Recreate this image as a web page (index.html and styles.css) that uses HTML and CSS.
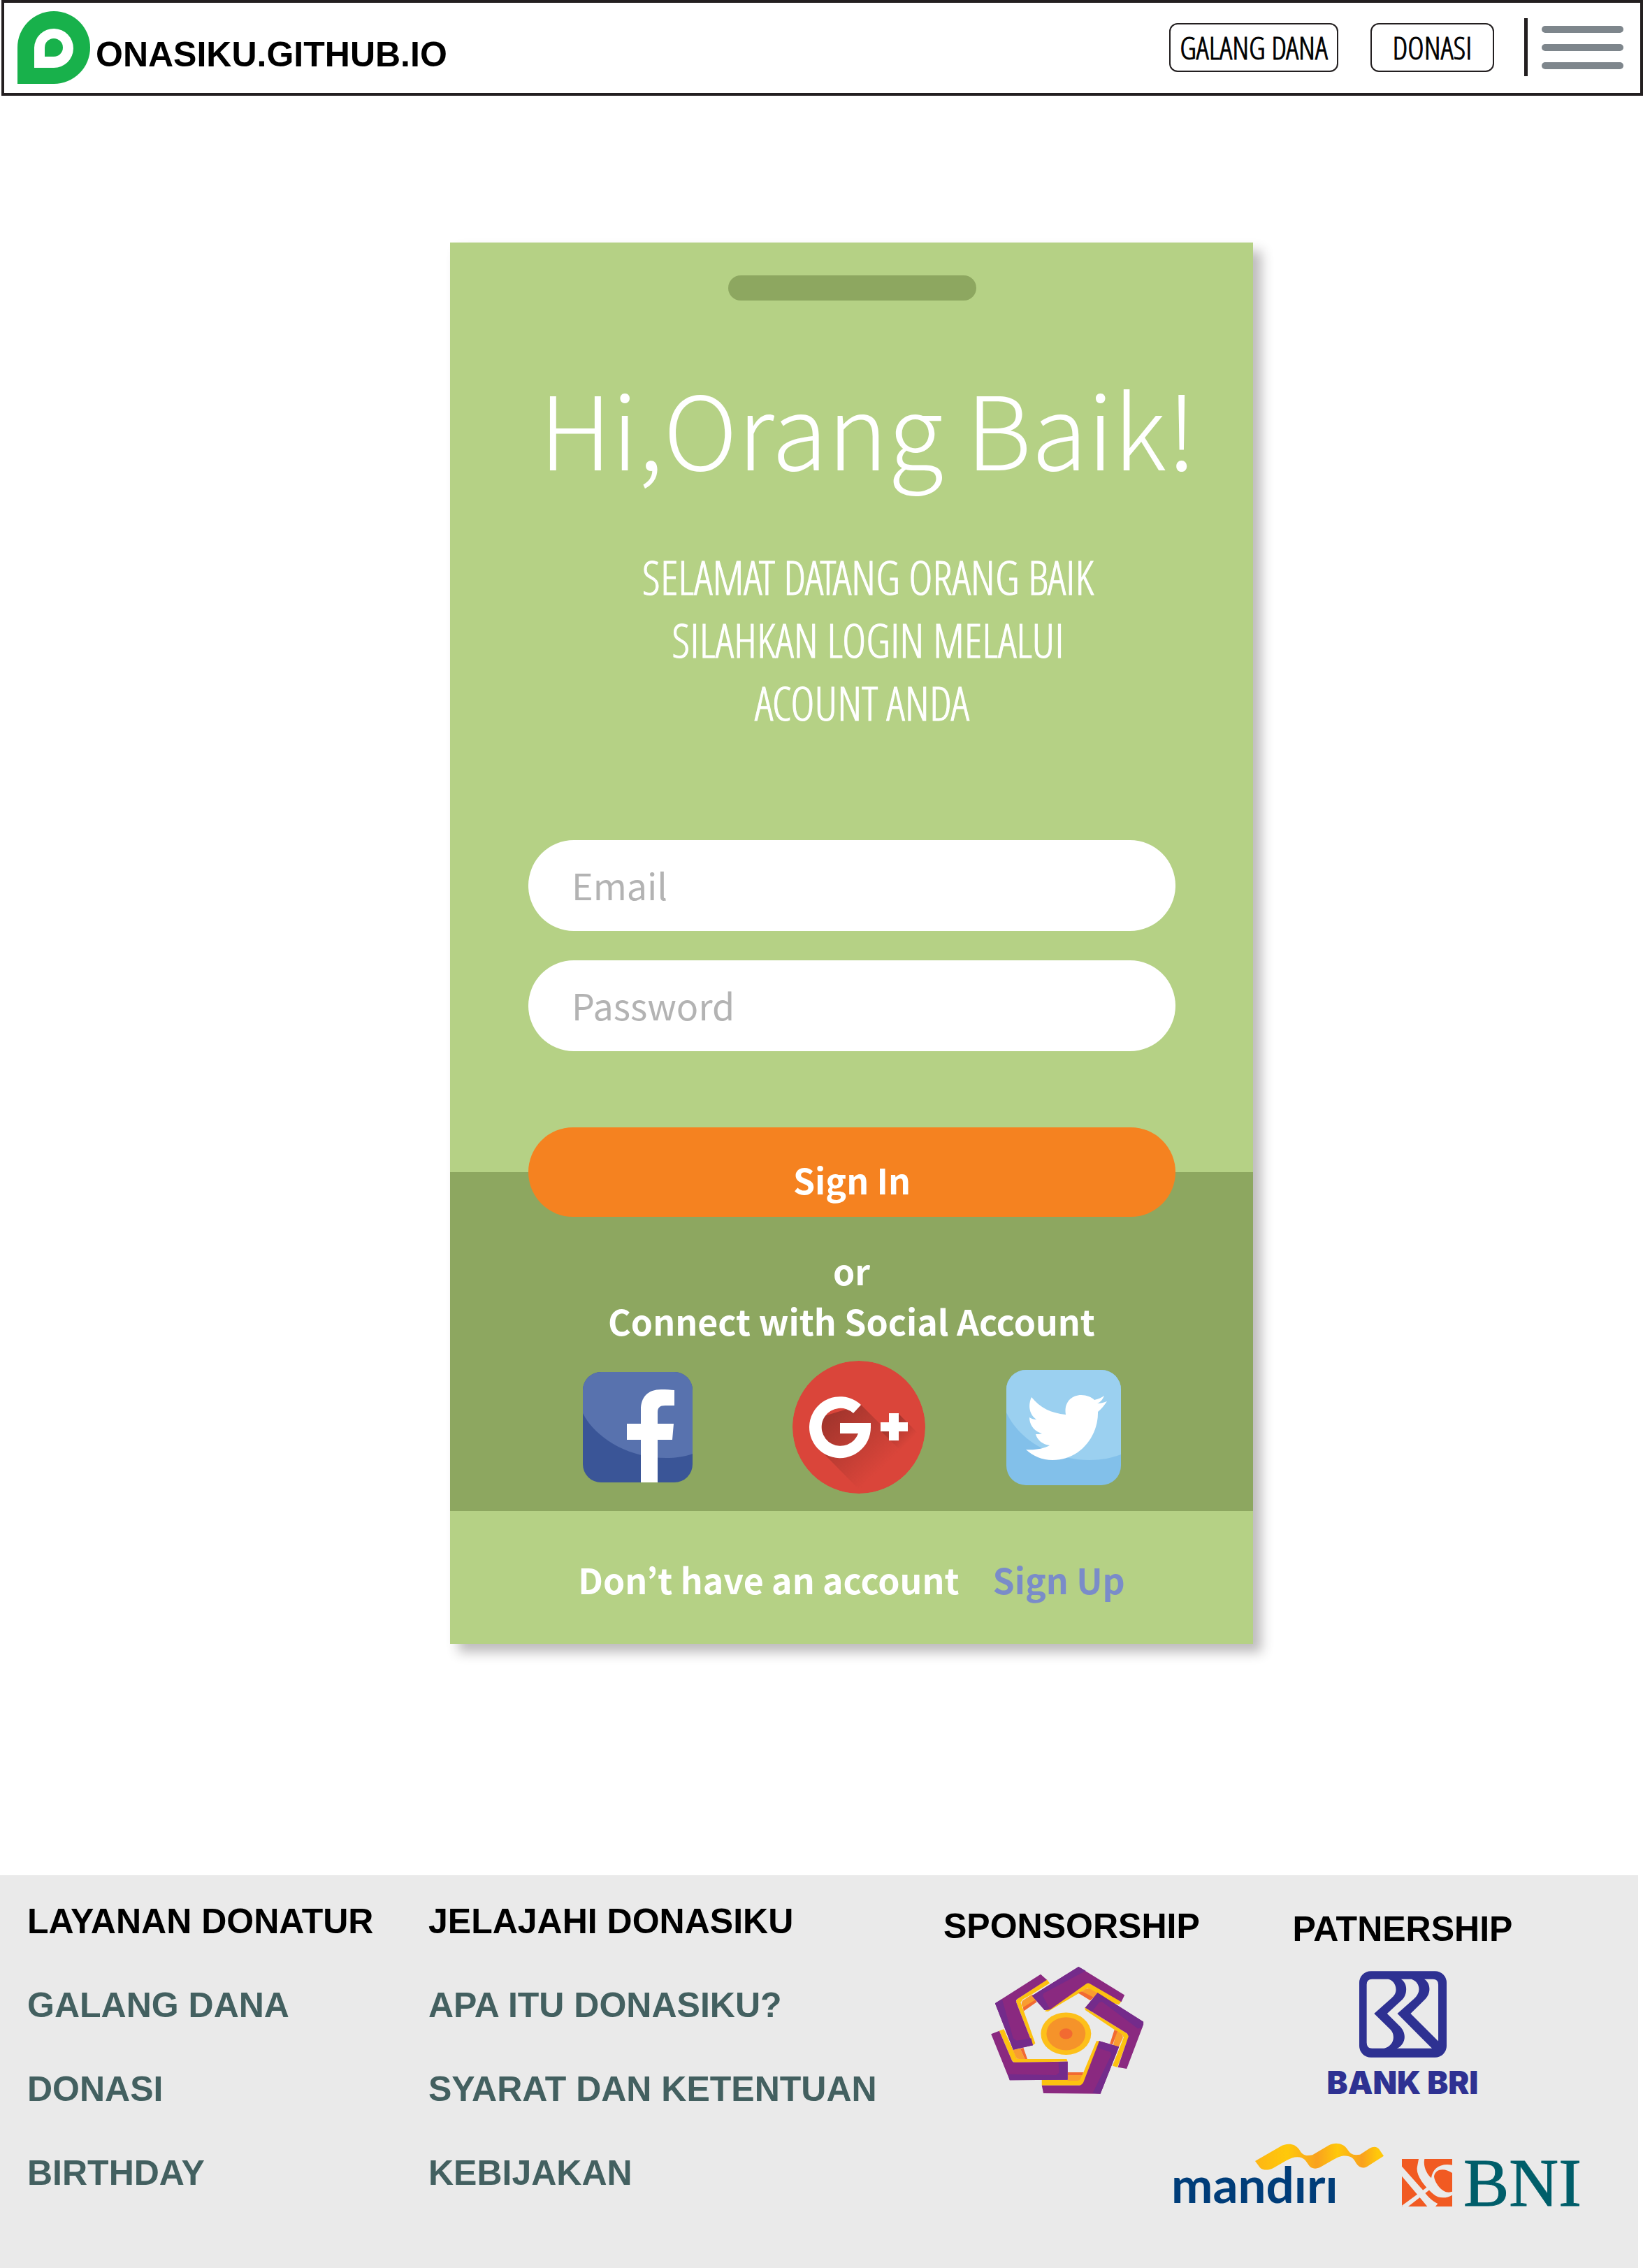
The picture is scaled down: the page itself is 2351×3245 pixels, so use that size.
FILE: index.html
```html
<!DOCTYPE html>
<html lang="id">
<head>
<meta charset="utf-8">
<meta name="viewport" content="width=device-width, initial-scale=1">
<title>Donasiku - Login</title>
<link rel="stylesheet" href="styles.css">
</head>
<body>
<header class="topbar">
  <a class="brand" href="#">
    <svg class="brand-mark" viewBox="0 0 104 104" role="img" aria-label="D">
      <path fill="#18b14b" d="M0 104V52A52 52 0 1 1 52 104Z"/>
      <path fill="#fff" d="M24 81V52A28 28 0 1 1 52 81Z"/>
      <path fill="#18b14b" d="M39 65V52A13 13 0 1 1 52 65Z"/>
    </svg>
    <span class="brand-name">ONASIKU.GITHUB.IO</span>
  </a>
  <nav class="actions">
    <button class="outline-btn" type="button">GALANG DANA</button>
    <button class="outline-btn outline-btn--small" type="button">DONASI</button>
    <button class="menu-btn" type="button" aria-label="Menu">
      <span class="menu-bar"></span>
      <span class="menu-bar"></span>
      <span class="menu-bar"></span>
    </button>
  </nav>
</header>

<main class="main">
  <section class="card">
    <div class="card-top">
      <div class="handle"></div>
      <div class="intro">
        <h1 class="title">Hi,Orang Baik!</h1>
        <p class="welcome">SELAMAT DATANG ORANG BAIK<br>SILAHKAN LOGIN MELALUI<br>ACOUNT ANDA&nbsp;</p>
      </div>
      <form class="login">
        <input class="field" type="email" placeholder="Email" aria-label="Email">
        <input class="field" type="password" placeholder="Password" aria-label="Password">
        <button class="signin" type="submit">Sign In</button>
      </form>
    </div>
    <div class="card-social">
      <p class="connect">or<br>Connect with Social Account</p>
      <div class="social">
        <a class="social-link social-link--facebook" href="#" aria-label="Facebook">
          <svg viewBox="0 0 157 158">
            <path fill="#3a5597" d="M0 0H157V158H0Z"/>
            <path fill="#5872ae" d="M0 59C15 90 60 123 119 123C133 123 146 121 157 117V0H0Z"/>
            <path fill="#fff" d="M83 158V97H63V74H83V54C83 36 93 25 112 25C119 25 126 25.500 131 26V48H118C110 48 107 51 107 58V74H130L128 97H107V158Z"/>
          </svg>
        </a>
        <a class="social-link social-link--google" href="#" aria-label="Google Plus">
          <svg viewBox="0 0 190 190">
            <defs>
              <linearGradient id="gShade" gradientUnits="userSpaceOnUse" x1="60" y1="74" x2="132" y2="150">
                <stop offset="0" stop-color="#a3352d"/>
                <stop offset="1" stop-color="#da453a"/>
              </linearGradient>
              <linearGradient id="plusShade" gradientUnits="userSpaceOnUse" x1="140" y1="90" x2="166" y2="116">
                <stop offset="0" stop-color="#a3352d"/>
                <stop offset="1" stop-color="#da453a"/>
              </linearGradient>
            </defs>
            <circle cx="95" cy="95" r="95" fill="#da453a"/>
            <path fill="url(#gShade)" d="M98 63L164 129L96 185L42 130L42 80Z"/>
            <path fill="url(#plusShade)" d="M152 76L182 106L157 131L127 101Z"/>
            <path fill="#fff" d="M98 63A44 44 0 1 0 112 95V89H68V104H94A27 27 0 1 1 87 75Z"/>
            <path fill="#fff" d="M138 75H152V88H165V101H152V114H138V101H126V88H138Z"/>
          </svg>
        </a>
        <a class="social-link social-link--twitter" href="#" aria-label="Twitter">
          <svg viewBox="0 0 164 165">
            <path fill="#82c0ea" d="M0 0H164V165H0Z"/>
            <path fill="#9bd0f0" d="M0 61C18 100 66 129 119 129C136 129 151 126 164 121V0H0Z"/>
            <path fill="#fff" d="M36 39C48 54 64 62 85 64C82 47 93 36 107 36C115 36 122 39 126 43C131 42 136 40 140 37C138 42 135 46 130 48C135 48 139 47 144 45C140 51 136 56 131 60C132 92 108 129 66 129C51 129 38 123 28 114C40 115 53 113 62 108C52 107 44 100 42 92C45 92 48 92 51 91C40 88 33 79 33 68C36 70 39 71 43 71C32 63 31 50 36 39Z"/>
          </svg>
        </a>
      </div>
    </div>
    <p class="signup">Don’t have an account <a class="signup-link" href="#">Sign Up</a></p>
  </section>
</main>

<footer class="footer">
  <nav class="links">
    <h2 class="footer-title">LAYANAN DONATUR</h2>
    <a href="#">GALANG DANA</a>
    <a href="#">DONASI</a>
    <a href="#">BIRTHDAY</a>
  </nav>
  <nav class="links">
    <h2 class="footer-title">JELAJAHI DONASIKU</h2>
    <a href="#">APA ITU DONASIKU?</a>
    <a href="#">SYARAT DAN KETENTUAN</a>
    <a href="#">KEBIJAKAN</a>
  </nav>
  <section class="sponsor">
    <h2 class="footer-title">SPONSORSHIP</h2>
    <svg class="sponsor-logo" viewBox="235 341 657 547" role="img" aria-label="Sponsor">
      <g fill="#fdc110">
        <path d="M465 532L480 533L612 455L650 432L690 455L760 497L785 504L795 490L660 411H645Z"/>
        <path d="M637 515L820 628L827 640L778 773L757 767L805 645L800 635L640 527Z"/>
        <path d="M688 660H702L632 845L622 851H453V828H610L630 800Z"/>
        <path d="M270 616L290 609L345 735L355 738H560L564 748L335 753L325 745Z"/>
        <path d="M475 396L487 412L412 458L370 482L362 495L375 530L425 670L415 678L342 490L347 480Z"/>
      </g>
      <g fill="#f99d30">
        <path d="M625 447L642 436Q652 432 662 437L695 455L668 480Z"/>
        <path d="M775 615L796 630Q804 638 801 648L784 686L760 678Z"/>
        <path d="M564 805H627L618 825Q614 831 606 831H564Z"/>
        <path d="M328 698L360 693L380 738H355Q346 738 342 730Z"/>
        <path d="M368 510Q362 495 372 485L412 460L430 487L375 517Z"/>
      </g>
      <g fill="#f26a31">
        <path d="M608 453L625 447L675 472L662 486Z"/>
        <path d="M765 612L778 618L758 675L746 672Z"/>
        <path d="M564 795H632L627 807H564Z"/>
        <path d="M360 693L374 690L391 738H380Z"/>
        <path d="M372 516L424 484L432 492L375 532Z"/>
      </g>
      <g fill="#8a2980">
        <path d="M611 341L809 463L795 492L660 414Q652 409 645 414L490 524L465 527L411 466Z"/>
        <path d="M693 453L890 578V590L818 780L780 773L826 640L820 628L640 517Z"/>
        <path d="M700 660L785 685L705 887L460 885L453 851H615Q626 850 632 838Z"/>
        <path d="M235 630L270 617L325 745Q329 753 338 752L564 749V827L315 829Z"/>
        <path d="M448 373L475 397L347 480Q340 486 344 496L415 678L330 698L252 498Z"/>
      </g>
      <g fill="#742b8b">
        <path d="M611 341L642 358L460 455L458 468L488 524L465 527L411 466Z"/>
        <path d="M693 453L890 578L885 602L866 607L712 491L700 494L668 534L640 517Z"/>
        <path d="M700 660L785 685L705 887L672 884L752 720L748 708L693 690Z"/>
        <path d="M564 749V827L315 829L308 803L515 807L527 797L525 750Z"/>
        <path d="M252 498L282 480L330 648L345 659L407 648L415 678L330 698Z"/>
      </g>
      <ellipse cx="557" cy="629" rx="108" ry="91" fill="#fdc01a"/>
      <ellipse cx="557" cy="629" rx="84" ry="71" fill="#f5932a"/>
      <ellipse cx="557" cy="629" rx="28" ry="23" fill="#f26a31"/>
    </svg>
  </section>
  <section class="partners">
    <div class="partner-main">
      <h2 class="footer-title">PATNERSHIP</h2>
      <svg class="bri-logo" viewBox="365 360 376 372" aria-hidden="true">
        <rect x="365" y="360" width="376" height="372" rx="50" fill="#2e3192"/>
        <g fill="#eaeaea">
          <path d="M420 395H490C510 400 523 418 523 440C523 455 515 467 505 475L429 543L495 608C508 620 512 632 512 645C512 668 497 685 472 693H420Q397 693 397 668V418Q397 395 420 395Z"/>
          <path d="M545 395H590C612 403 622 420 622 438C622 455 613 468 600 480L529 543L678 693H527C547 685 560 665 560 643C560 625 552 610 540 598L485 543L550 483C560 473 567 458 567 438C567 420 560 405 545 395Z"/>
          <path d="M645 395H682Q705 395 705 418V662L586 543L650 480C660 468 667 455 667 437C667 420 660 405 645 395Z"/>
        </g>
      </svg>
      <p class="bri-name">BANK BRI</p>
    </div>
    <div class="partner-row">
      <div class="mandiri">
        <svg class="mandiri-ribbon" viewBox="408 78 554 117" aria-hidden="true">
          <defs>
            <linearGradient id="ribbon">
              <stop offset="0" stop-color="#fdb515"/>
              <stop offset=".25" stop-color="#ffc90a"/>
              <stop offset=".48" stop-color="#f9a11f"/>
              <stop offset=".64" stop-color="#ffc80a"/>
              <stop offset=".83" stop-color="#f9a01f"/>
              <stop offset=".95" stop-color="#ffc80a"/>
            </linearGradient>
          </defs>
          <path fill="url(#ribbon)" d="M408 156L515 94C545 76 580 80 597 105C610 128 622 137 655 130L725 88C755 72 790 80 805 105C820 128 830 132 860 128L900 102C920 90 935 95 942 105L962 134L890 180C870 190 855 183 843 165C830 140 815 130 780 135C765 138 755 145 745 150L690 182C670 192 650 190 640 175C625 155 620 140 590 139C575 139 560 145 545 152L485 187C465 197 440 197 428 183Z"/>
        </svg>
        <p class="mandiri-name">mandırı</p>
      </div>
      <div class="bni">
        <svg class="bni-mark" viewBox="78 148 216 204" aria-hidden="true">
          <path fill="#f15a22" d="M78 148H294V352H78Z"/>
          <g fill="#eaeaea">
            <path d="M78 180L165 278C185 305 205 328 232 340L222 352H187L142 298L78 222Z"/>
            <path d="M80 352H105L200 278L190 266L78 348Z"/>
            <path d="M150 148H175C168 180 185 212 204 230C210 190 240 165 294 174V208C260 185 222 190 216 222C218 250 250 292 280 291L294 288V303C270 318 235 318 215 300C180 270 135 220 144 180Z"/>
          </g>
        </svg>
        <p class="bni-name">BNI</p>
      </div>
    </div>
  </section>
</footer>
</body>
</html>
```
FILE: styles.css
```css
*, *::before, *::after { box-sizing: border-box; }

body {
  margin: 0;
  min-height: 100vh;
  display: flex;
  flex-direction: column;
  background: #fff;
  color: #000;
  font-family: "Liberation Sans", Arial, sans-serif;
}

h1, h2, p { margin: 0; }
a { color: inherit; text-decoration: none; }
button { font: inherit; color: inherit; cursor: pointer; }
svg { display: block; width: 100%; height: 100%; }

/* Top bar */
.topbar {
  display: flex;
  align-items: center;
  justify-content: space-between;
  min-height: 137px;
  margin-left: 2px;
  padding: 0 24px 2px 19px;
  border: 4px solid #231f20;
}
.brand { display: flex; align-items: flex-end; gap: 8px; }
.brand-mark { width: 104px; height: 104px; }
.brand-name { font-size: 50px; font-weight: 700; line-height: 84px; }
.actions { display: flex; align-items: center; }
.outline-btn {
  height: 70px;
  width: 242px;
  margin-right: 46px;
  padding: 0;
  border: 2px solid #231f20;
  border-radius: 12px;
  background: #fff;
  font-family: "Open Sans Condensed Light", "Open Sans Condensed", "Roboto Condensed", sans-serif;
  font-size: 45px;
  font-weight: 300;
  line-height: 60px;
  white-space: nowrap;
  -webkit-text-stroke: 1px;
}
.outline-btn--small { width: 177px; margin-right: 43px; }
.menu-btn {
  display: flex;
  flex-direction: column;
  justify-content: center;
  gap: 16px;
  height: 83px;
  padding: 0 0 0 20px;
  border: 0;
  border-left: 5px solid #231f20;
  background: none;
}
.menu-bar { width: 117px; height: 10px; border-radius: 5px; background: #7e868c; }

/* Login card */
.main { padding: 210px 0 331px 86px; }
.card {
  max-width: 1149px;
  margin: 0 auto;
  background: #b5d185;
  box-shadow: 12px 12px 16px rgba(35, 31, 32, .3);
  color: #fff;
  font-family: "Noto Sans CJK JP", "Noto Sans", sans-serif;
  font-size: 50px;
  font-weight: 700;
}
.card-top { padding: 47px 111px 0 112px; }
.handle { width: 355px; height: 36px; margin: 0 auto; border-radius: 18px; background: #8da760; }
.intro { padding: 90px 0 152px 46px; text-align: center; }
.title { margin: 0 -60px; font-size: 146px; font-weight: 300; line-height: 180px; }
.welcome {
  margin-top: 80px;
  font-family: "Open Sans Condensed Light", "Open Sans Condensed", "Roboto Condensed", sans-serif;
  font-size: 66px;
  font-weight: 300;
  line-height: 90px;
  -webkit-text-stroke: 1px;
}
.login { display: flex; flex-direction: column; }
.field {
  height: 130px;
  margin-bottom: 42px;
  padding: 0 62px 4px;
  border: 0;
  border-radius: 65px;
  background: #fff;
  font: 400 52px "Noto Sans CJK JP", "Noto Sans", sans-serif;
}
.field::placeholder { color: #b3b3b3; opacity: 1; }
.signin {
  position: relative;
  height: 128px;
  margin: 67px 0 -64px;
  padding: 20px 0 0;
  border: 0;
  border-radius: 64px;
  background: #f58220;
}
.card-social { padding: 104px 0 25px; background: #8da760; }
.connect { text-align: center; line-height: 72px; }
.social { display: flex; align-items: center; justify-content: center; gap: 116px; margin-top: 22px; }
.social-link { overflow: hidden; }
.social-link--facebook { width: 157px; height: 158px; margin-right: 27px; border-radius: 26px; }
.social-link--google { width: 190px; height: 190px; border-radius: 50%; }
.social-link--twitter { width: 164px; height: 165px; border-radius: 28px; }
.signup { display: flex; justify-content: center; gap: 48px; padding: 59px 0 55px; line-height: 76px; }
.signup-link { color: #7a8cc9; }

/* Footer */
.footer {
  flex: 1;
  display: grid;
  grid-template-columns: 574fr 737fr 326fr 668fr;
  margin-right: 7px;
  padding: 36px 0 60px 39px;
  background: #eaeaea;
  font-size: 50px;
  font-weight: 700;
  line-height: 60px;
}
.footer-title { font-size: 50px; }
.links { display: flex; flex-direction: column; align-items: flex-start; gap: 60px; color: #436060; }
.links .footer-title { color: #000; }
.sponsor { min-width: 0; padding-top: 7px; }
.sponsor-logo { width: 219px; height: 182px; margin: 28px 0 0 68px; }
.partners { padding-top: 11px; }
.partner-main { display: flex; flex-direction: column; align-items: center; padding-right: 6px; }
.bri-logo { width: 125px; height: 124px; margin-top: 30px; }
.bri-name { margin-top: 14px; color: #2e3192; font: 900 45px/44px Inter, sans-serif; }
.partner-row { display: flex; align-items: flex-start; gap: 22px; margin-top: 64px; }
.mandiri { width: 308px; }
.mandiri-ribbon { width: 184px; height: 39px; margin-left: 120px; }
.mandiri-name { margin-top: -16px; color: #003d79; font: 700 71px/72px Lato, sans-serif; }
.bni { display: flex; align-items: center; gap: 16px; margin-top: 23px; }
.bni-mark { width: 72px; height: 68px; }
.bni-name { color: #005e6a; font: 400 98px/68px "Liberation Serif", serif; -webkit-text-stroke: 1px; }
```
